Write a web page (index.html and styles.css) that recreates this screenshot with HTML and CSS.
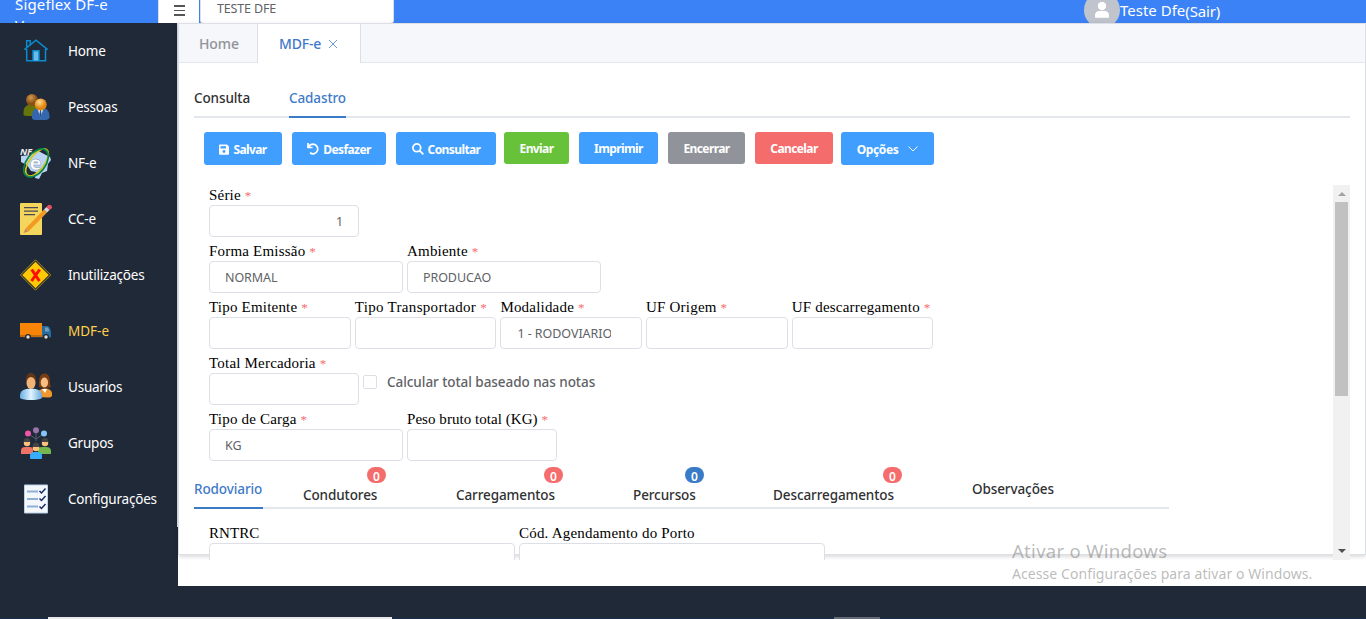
FILE: index.html
```html
<!DOCTYPE html>
<html lang="pt-BR">
<head>
<meta charset="utf-8">
<title>Sigeflex DF-e</title>
<link rel="stylesheet" href="styles.css">
</head>
<body>
<header class="topbar">
  <div class="brand">Sigeflex DF-e<br>V</div>
  <div class="burger"><i></i><i></i><i></i></div>
  <div class="company">TESTE DFE</div>
  <div class="user">
    <span class="avatar"><svg width="16" height="16" viewBox="0 0 16 16" fill="#fff"><circle cx="8" cy="4" r="4.2"/><path d="M1 15v-1.500q0-4.500 4.500-4.500h5q4.500 0 4.500 4.500V15q0 .7-.7.700H1.700Q1 15.700 1 15z"/></svg></span>
    <span class="user-name">Teste Dfe</span><span class="logout">(Sair)</span>
  </div>
</header>
<div class="shell">
  <nav class="sidebar">
    <a class="item"><svg class="ico" viewBox="0 0 32 32"><g fill="none" stroke="#0a8ccf" stroke-width="1.500"><path d="M6.700 14v11.800h18.800V14M4.300 14.700 16 5.200l11.700 9.500M6.700 12V5.700h3.500V9"/><path d="M13 25.500V15.700h6v9.800" fill="#6dbbea"/></g></svg><span>Home</span></a>
    <a class="item"><svg class="ico" viewBox="0 0 32 32"><defs><radialGradient id="gb" cx=".4" cy=".3"><stop stop-color="#d59b4c"/><stop offset="1" stop-color="#875016"/></radialGradient><radialGradient id="go" cx=".4" cy=".3"><stop stop-color="#ffdc90"/><stop offset="1" stop-color="#df8611"/></radialGradient></defs><path d="M3.500 24v-3q0-7 7-7.500 6 0 7.500 5v6.500H7q-2.500 0-3.500-1z" fill="#667509"/><circle cx="12" cy="9" r="6" fill="url(#gb)"/><path d="M12 27.500v-3q0-8 8.500-8t9 8v2.500q-1.500 2-4 2H16q-3 0-4-1.500z" fill="#3567ae"/><path d="m17.500 17 3 10 3-10z" fill="#f1f5fb"/><path d="m20 19-.7 5 1.200 3 1.200-3-.7-5z" fill="#27518d"/><circle cx="20.700" cy="13.500" r="6" fill="url(#go)"/></svg><span>Pessoas</span></a>
    <a class="item"><svg class="ico" viewBox="0 0 32 32"><path d="m1 9 9-1 7-5 5 3 8 4 1 3-3 4-1 7-5 2-3 6-4-1 1-6-5-1-4-6-6-3z" fill="#b9d4f5"/><ellipse cx="17" cy="15.500" rx="7.500" ry="16" transform="rotate(37 17 15.500)" fill="none" stroke="#d6c61c" stroke-width="1.700"/><ellipse cx="16" cy="16" rx="9.500" ry="16" transform="rotate(37 16 16)" fill="none" stroke="#078449" stroke-width="1.700"/><text x="0" y="8" class="nf">NF</text><text x="9.500" y="22.500" class="nfe">e</text></svg><span>NF-e</span></a>
    <a class="item"><svg class="ico" viewBox="0 0 32 32"><rect y="0" width="22" height="32" rx="1" fill="#f5d65d"/><path d="M4 4.700h14M4 8.200h14M4 11.700h11" stroke="#4b4856" stroke-width="1.200"/><path d="m5.500 25.500 18.500-19 3 3L8.500 28.500z" fill="#f39b20"/><path d="m5.500 25.500 3 3L3.500 30z" fill="#c98c5b"/><path d="m24 6.500 2.500-2.500 3 3L27 9.500z" fill="#d8dce0"/><path d="m26.500 4 1.500-1.700q1.700-1.200 3.200.3t.300 3L29.500 7z" fill="#e94f63"/></svg><span>CC-e</span></a>
    <a class="item"><svg class="ico" viewBox="0 0 32 32"><path d="m15.500.8 15.200 15.200-15.200 15.200L.4 16z" fill="#202938" stroke="#d5a80a" stroke-width=".8"/><path d="M15.500 2.700 28.800 16 15.500 29.300 2.200 16z" fill="#ffc905"/><path d="m11.700 10.500 7.700 11.500M19.700 10.500 11.500 22" stroke="#ff0b00" stroke-width="3"/></svg><span>Inutilizações</span></a>
    <a class="item active"><svg class="ico" viewBox="0 0 32 32"><path d="M3 20h28v3H3z" fill="#303a44"/><path d="M0 8h22v14H0z" fill="#f98508"/><path d="M0 20h22v2H0z" fill="#c66b0d"/><path d="M22 11h5q3 0 4 6v5h-9z" fill="#236da2"/><path d="M25 12.500h3l1.500 4h-4.500z" fill="#799db0"/><circle cx="8" cy="22" r="3" fill="#26282b"/><circle cx="8" cy="22" r="1.700" fill="#ddd"/><circle cx="26" cy="22" r="3" fill="#26282b"/><circle cx="26" cy="22" r="1.700" fill="#ddd"/></svg><span>MDF-e</span></a>
    <a class="item"><svg class="ico" viewBox="0 0 32 32"><defs><linearGradient id="bl"><stop stop-color="#65afe4"/><stop offset=".5" stop-color="#e3f4ff"/><stop offset="1" stop-color="#65aadd"/></linearGradient></defs><path d="M19 11q0-8.500 5.500-8.500T30 11q0 4 1 5-6 2-12 0z" fill="#793d14"/><ellipse cx="24.400" cy="11.500" rx="3.700" ry="5" fill="#f7bd81"/><path d="M18 26v-4q1-4.500 7-4.500t7 4.500V25q-1 1.500-4 1.500z" fill="#ef982f"/><path d="m22 18 3 4 2-4z" fill="#fff"/><path d="M0 27v-3q0-6.500 11-6.500T22 24v3q-3 2-11 2T0 27z" fill="url(#bl)"/><ellipse cx="11" cy="8.500" rx="5" ry="6.800" fill="#633516"/><ellipse cx="11" cy="12" rx="4.500" ry="6" fill="#f2b377"/></svg><span>Usuarios</span></a>
    <a class="item"><svg class="ico" viewBox="0 0 32 32"><path d="M8 6.500 16 12l8-5.500M16 4v10" stroke="#506174" fill="none"/><circle cx="8" cy="6.500" r="3" fill="#ef55a7"/><circle cx="16" cy="3.200" r="3" fill="#9873ac"/><circle cx="24" cy="6.500" r="3" fill="#84c6fb"/><path d="M1 27v-3q0-4 4-4h5q3 0 3 4v3z" fill="#ee7468"/><path d="M18 27v-4q0-3 4-3h4q5 0 5 4v3z" fill="#75b74e"/><circle cx="7" cy="16" r="3.200" fill="#ffc27d"/><path d="M3.800 15v-1q0-3 3.200-3t3.200 3v1z" fill="#444"/><circle cx="25" cy="16" r="3.200" fill="#ffc27d"/><path d="M21.800 15v-1q0-3 3.200-3t3.200 3v1z" fill="#444"/><path d="M10 31v-2q0-4 4-4h4q4 0 4 4v2q0 1-1 1H11q-1 0-1-1z" fill="#38aefa"/><circle cx="16" cy="21" r="3.300" fill="#ffc27d"/><path d="M12.700 20v-1q0-3.500 3.300-3.500t3.300 3.500v1z" fill="#444"/></svg><span>Grupos</span></a>
    <a class="item"><svg class="ico" viewBox="0 0 32 32"><path d="M4.500 2h23v28h-23z" fill="#f4f8fd" stroke="#bdd2e9"/><path d="M7 8.500h11M7 16h11M7 23.500h11" stroke="#90afd7" stroke-width="1.800"/><path d="m19.500 8 2 2 4-4.500M19.500 15.500l2 2 4-4.500M19.500 23.500l2 2 4-4.500" fill="none" stroke="#172c66" stroke-width="1.500"/></svg><span class="tight">Configurações</span></a>
  </nav>
  <main class="main">
    <section class="card">
      <div class="page-tabs"><div class="ptab first">Home</div><div class="ptab current"><span>MDF-e</span><svg width="10" height="10" viewBox="0 0 10 10"><path d="m1 1 8 8M9 1 1 9" stroke="#5e8cc8" stroke-width=".9"/></svg></div></div>
      <div class="sub-tabs"><span class="stab s-consulta">Consulta</span><span class="stab s-cadastro on">Cadastro</span></div>
      <div class="actions">
        <button class="btn salvar"><svg width="10" height="11" viewBox="0 0 10 11"><path d="M1 .5h7l2 2V10q0 .8-.8.800H1Q0 10.800 0 10V1.500Q0 .5 1 .5z" fill="#fff"/><path d="M1.500 2.200h5.500v2.300H1.500z" fill="#409eff"/><circle cx="5" cy="7.500" r="1.400" fill="#409eff"/></svg><span>Salvar</span></button>
        <button class="btn desfazer"><svg width="12" height="12" viewBox="0 0 12 12" fill="none" stroke="#fff" stroke-width="1.700"><path d="M1 0v4.500h4.500M1.500 4Q3 1.200 6.300 1.200A4.800 4.800 0 1 1 3 9.800"/></svg><span>Desfazer</span></button>
        <button class="btn consultar"><svg width="12" height="12" viewBox="0 0 12 12" fill="none" stroke="#fff" stroke-width="1.700"><circle cx="4.800" cy="4.800" r="3.900"/><path d="m7.600 7.600 3.800 3.800"/></svg><span>Consultar</span></button>
        <button class="btn enviar"><span>Enviar</span></button>
        <button class="btn imprimir"><span>Imprimir</span></button>
        <button class="btn encerrar"><span>Encerrar</span></button>
        <button class="btn cancelar"><span>Cancelar</span></button>
        <button class="btn opcoes"><span>Opções</span><svg width="10" height="6" viewBox="0 0 10 6"><path d="m.5.5 4.500 4.500L9.500.5" fill="none" stroke="#fff"/></svg></button>
      </div>
      <div class="scroller">
        <div class="form">
          <div class="row"><label class="f w150"><span class="lb">Série <b>*</b></span><span class="in num">1</span></label></div>
          <div class="row"><label class="f w194"><span class="lb">Forma Emissão <b>*</b></span><span class="in">NORMAL</span></label><label class="f w194"><span class="lb">Ambiente <b>*</b></span><span class="in">PRODUCAO</span></label></div>
          <div class="row"><label class="f w142"><span class="lb">Tipo Emitente <b>*</b></span><span class="in"></span></label><label class="f w142"><span class="lb wide">Tipo Transportador <b>*</b></span><span class="in"></span></label><label class="f w142"><span class="lb">Modalidade <b>*</b></span><span class="in"><span class="value">1 - RODOVIARIO</span></span></label><label class="f w142"><span class="lb">UF Origem <b>*</b></span><span class="in"></span></label><label class="f w142"><span class="lb">UF descarregamento <b>*</b></span><span class="in"></span></label></div>
          <div class="row"><label class="f w150"><span class="lb">Total Mercadoria <b>*</b></span><span class="in"></span></label><label class="check"><i></i><span>Calcular total baseado nas notas</span></label></div>
          <div class="row"><label class="f w194"><span class="lb">Tipo de Carga <b>*</b></span><span class="in">KG</span></label><label class="f w150"><span class="lb narrow">Peso bruto total (KG) <b>*</b></span><span class="in"></span></label></div>
          <div class="detail-tabs">
            <span class="dt on">Rodoviario</span>
            <span class="dt low condutores">Condutores<sup class="badge">0</sup></span>
            <span class="dt low carreg">Carregamentos<sup class="badge">0</sup></span>
            <span class="dt low percursos">Percursos<sup class="badge blue">0</sup></span>
            <span class="dt low descarreg">Descarregamentos<sup class="badge">0</sup></span>
            <span class="dt obs">Observações</span>
          </div>
          <div class="row last"><label class="f w306"><span class="lb narrow">RNTRC</span><span class="in"></span></label><label class="f w306"><span class="lb">Cód. Agendamento do Porto</span><span class="in"></span></label></div>
        </div>
        <div class="bar"><span class="up"></span><span class="thumb"></span><span class="down"></span></div>
      </div>
    </section>
  </main>
</div>
<footer class="foot"><i class="task-a"></i><i class="task-b"></i></footer>
<div class="watermark"><div class="wm1">Ativar o Windows</div><div class="wm2">Acesse Configurações para ativar o Windows.</div></div>
</body>
</html>
```
FILE: styles.css
```css
* { box-sizing: border-box; }
body { margin: 0; width: 1366px; height: 619px; overflow: hidden; background: #fff; font-family: "Noto Sans", sans-serif; font-size: 14px; display: flex; flex-direction: column; }
.topbar { height: 23px; flex: none; background: #3b82f6; display: flex; overflow: hidden; }
.brand { width: 158px; padding-left: 15px; margin-top: -6px; color: #fff; font-size: 15px; line-height: 21px; letter-spacing: .15px; height: 42px; }
.burger { width: 41px; background: #fff; border-left: 1px solid #dcdfe6; display: flex; flex-direction: column; align-items: center; gap: 3px; padding-top: 5px; }
.burger i { width: 11px; height: 1.500px; background: #555; }
.company { margin-left: 1px; width: 194px; height: 24px; background: #fff; border: 1px solid #dcdfe6; border-top: 0; border-radius: 0 0 4px 4px; padding-left: 16px; line-height: 17px; color: #606266; font-size: 12.500px; letter-spacing: -.15px; }
.user { margin-left: 690px; display: flex; color: #fff; font-size: 15px; height: 23px; line-height: 20px; }
.avatar { width: 36px; height: 36px; margin-top: -8px; border-radius: 50%; background: #c0c4cc; display: flex; justify-content: center; padding-top: 10px; }
.user-name { letter-spacing: 0; }
.logout { padding-top: 1px; letter-spacing: -.15px; }
.shell { display: flex; height: 563px; flex: none; }
.sidebar { width: 178px; background: linear-gradient(#dcdfe6, #dcdfe6) 177px 0 / 1px 504px no-repeat #202938; flex: none; }
.item { display: flex; align-items: center; height: 56px; padding-left: 20px; gap: 16px; color: #fff; font-size: 13.500px; letter-spacing: -.22px; }
.item.active { color: #ffd04b; letter-spacing: 0; }
.tight { letter-spacing: -.2px; }
.ico { width: 32px; height: 32px; }
.nf { font: italic bold 9.500px "Noto Sans", sans-serif; fill: #eee; }
.nfe { font: bold 20px "Noto Sans", sans-serif; fill: #fff; stroke: #7c8ba5; stroke-width: .4px; }
.main { width: 1188px; }
.card { height: 532px; border: 1px solid #dcdfe6; background: #fff; box-shadow: 0 2px 4px rgba(0,0,0,.12), 0 0 6px rgba(0,0,0,.04); }
.page-tabs { height: 39px; background: #f5f7fa; border-bottom: 1px solid #e4e7ed; display: flex; font-weight: 500; color: #909399; line-height: 40px; }
.ptab { height: 39px; }
.first { width: 78px; padding-left: 20px; letter-spacing: -.1px; }
.current { width: 104px; padding-left: 21px; background: #fff; color: #3f7ac8; border: solid #dcdfe6; border-width: 0 1px; display: flex; align-items: center; gap: 7px; letter-spacing: -.15px; }
.sub-tabs { display: flex; margin: 17px 15px 0; height: 38px; box-shadow: inset 0 -2px #e4e7ed; gap: 39px; }
.stab { font-weight: 500; font-size: 13.500px; line-height: 36px; color: #303133; letter-spacing: -.1px; }
.s-consulta { width: 56px; }
.s-cadastro { width: 57px; }
.stab.on, .dt.on { color: #3f7ac8; box-shadow: inset 0 -2px #3a7bc8; }
.actions { display: flex; align-items: flex-start; padding: 14px 0 0 25px; height: 67px; }
.btn { border: 0; border-radius: 3px; height: 33px; padding: 1px 0 0; background: #409eff; color: #fff; font: bold 12px "Noto Sans", sans-serif; letter-spacing: -.6px; display: flex; align-items: center; justify-content: center; gap: 4px; white-space: nowrap; }
.salvar { width: 78px; margin-right: 10px; }
.desfazer { width: 94px; margin-right: 10px; }
.consultar { width: 100px; margin-right: 8px; }
.enviar { width: 65px; height: 32px; margin-right: 10px; background: #67c23a; }
.imprimir { width: 79px; height: 32px; margin-right: 10px; }
.encerrar { width: 77px; height: 32px; margin-right: 10px; background: #909399; }
.cancelar { width: 78px; height: 32px; margin-right: 8px; background: #f56c6c; }
.opcoes { width: 93px; gap: 10px; letter-spacing: -.4px; }
.scroller { height: 375px; margin: 0 15px; display: flex; overflow: hidden; position: relative; }
.form { width: 1139px; }
.row { display: flex; gap: 4px; padding-left: 15px; height: 56px; }
.f { display: block; flex: none; }
.w150 { width: 150px; } .w194 { width: 194px; } .w142 { width: 141.700px; } .w306 { width: 306px; }
.lb { display: block; height: 20px; line-height: 20px; white-space: nowrap; font-family: "Liberation Serif", serif; font-size: 15px; color: #000; letter-spacing: .2px; }
.lb.wide { letter-spacing: .32px; }
.lb.narrow { letter-spacing: .05px; }
.lb b { color: #f56c6c; font-weight: normal; font-size: 13px; }
.in { display: block; height: 32px; border: 1px solid #dcdfe6; border-radius: 4px; background: #fff; padding: 0 15px; line-height: 31px; color: #606266; font-size: 12.500px; letter-spacing: -.08px; }
.value { display: block; overflow: hidden; width: 95px; white-space: nowrap; padding-left: 1px; letter-spacing: -.05px; }
.num { text-align: right; }
.check { display: flex; gap: 10px; padding-top: 19px; color: #606266; font-weight: 500; font-size: 13.500px; line-height: 20px; letter-spacing: -.05px; }
.check i { width: 14px; height: 14px; margin-top: 3px; border: 1px solid #dcdfe6; border-radius: 2px; flex: none; }
.detail-tabs { width: 975px; height: 44px; margin-bottom: 14px; box-shadow: inset 0 -2px #e4e7ed; display: flex; font-weight: 500; font-size: 13.500px; color: #303133; }
.dt { line-height: 48px; height: 44px; position: relative; flex: none; width: 69px; letter-spacing: -.1px; white-space: nowrap; }
.low { line-height: 60px; }
.condutores { margin-left: 40px; width: 73px; }
.carreg { margin-left: 80px; width: 97px; }
.percursos { margin-left: 80px; width: 61px; }
.descarreg { margin-left: 79px; width: 119px; }
.obs { margin-left: 80px; width: 81px; }
.badge { position: absolute; right: -10px; top: 2px; width: 19px; height: 16px; border-radius: 8px; background: #f56c6c; color: #fff; text-align: center; line-height: 19px; font-size: 12px; font-weight: 600; }
.blue { background: #3a7bc8; }
.bar { width: 17px; background: #f1f1f1; display: flex; flex-direction: column; align-items: center; height: 375px; }
.up { margin-top: 7px; border: 4px solid transparent; border-top: 0; border-bottom-color: #a3a3a3; height: 4px; }
.thumb { width: 13px; height: 194px; background: #c1c1c1; margin-top: 6px; }
.down { margin-top: 153px; border: 4px solid transparent; border-bottom: 0; border-top-color: #505050; height: 4px; }
.foot { height: 33px; background: #202938; flex: none; display: flex; align-items: flex-end; border-bottom: 1px solid #192c4c; }
.task-a { margin-left: 48px; width: 344px; height: 2px; background: #e8e8e8; margin-bottom: -1px; }
.task-b { margin-left: 442px; width: 46px; height: 2px; background: #646b76; margin-bottom: -1px; }
.watermark { position: absolute; left: 1012px; top: 538px; color: rgba(110,110,110,.48); white-space: nowrap; }
.wm1 { font-size: 18.500px; line-height: 26px; letter-spacing: .3px; }
.wm2 { font-size: 14px; line-height: 20px; letter-spacing: .08px; }
```
